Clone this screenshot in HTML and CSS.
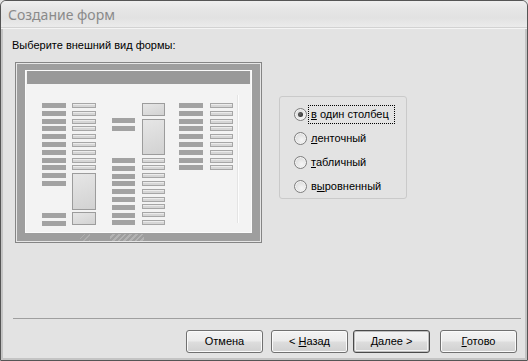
FILE: index.html
```html
<!DOCTYPE html>
<html lang="ru">
<head>
<meta charset="utf-8">
<title>Создание форм</title>
<link rel="stylesheet" href="styles.css">
</head>
<body>
<div class="window">
  <div class="titlebar"><span class="title">Создание форм</span></div>
  <div class="client">
    <div class="heading">Выберите внешний вид формы:</div>
    <div class="main">
      <div class="pic">
        <div class="pic-band">
          <div class="pic-inner">
            <div class="pic-header"></div>
            <div class="pic-body">
              <div class="stack s-a">
                <div class="lbl"></div><div class="lbl"></div><div class="lbl"></div><div class="lbl"></div>
                <div class="lbl"></div><div class="lbl"></div><div class="lbl"></div><div class="lbl"></div>
                <div class="lbl"></div><div class="lbl"></div><div class="lbl"></div>
                <div class="lbl a-gap"></div><div class="lbl"></div>
              </div>
              <div class="stack s-b">
                <div class="fld"></div><div class="fld"></div><div class="fld"></div><div class="fld"></div>
                <div class="fld"></div><div class="fld"></div><div class="fld"></div><div class="fld"></div>
                <div class="fld"></div>
                <div class="box b-big"></div>
                <div class="box b-small"></div>
              </div>
              <div class="stack s-c">
                <div class="lbl"></div><div class="lbl"></div>
                <div class="lbl c-gap"></div><div class="lbl"></div><div class="lbl"></div><div class="lbl"></div>
                <div class="lbl"></div><div class="lbl"></div><div class="lbl"></div><div class="lbl"></div>
                <div class="lbl"></div>
              </div>
              <div class="stack s-d">
                <div class="box d-top"></div>
                <div class="box d-big"></div>
                <div class="fld"></div><div class="fld"></div><div class="fld"></div><div class="fld"></div>
                <div class="fld"></div><div class="fld"></div><div class="fld"></div><div class="fld"></div>
                <div class="fld"></div>
              </div>
              <div class="stack s-e">
                <div class="lbl"></div><div class="lbl"></div><div class="lbl"></div><div class="lbl"></div>
                <div class="lbl"></div><div class="lbl"></div><div class="lbl"></div><div class="lbl"></div>
                <div class="lbl"></div>
              </div>
              <div class="stack s-f">
                <div class="fld"></div><div class="fld"></div><div class="fld"></div><div class="fld"></div>
                <div class="fld"></div><div class="fld"></div><div class="fld"></div><div class="fld"></div>
                <div class="fld"></div>
              </div>
              <div class="vline"></div>
            </div>
          </div>
        </div>
      </div>
      <div class="options">
        <div class="opt"><span class="radio checked"></span><span class="opt-text focus"><u>в</u> один столбец</span></div>
        <div class="opt"><span class="radio"></span><span class="opt-text"><u>л</u>енточный</span></div>
        <div class="opt"><span class="radio"></span><span class="opt-text"><u>т</u>абличный</span></div>
        <div class="opt"><span class="radio"></span><span class="opt-text">в<u>ы</u>ровненный</span></div>
      </div>
    </div>
    <div class="footer">
      <div class="sep"></div>
      <div class="buttons">
        <div class="btn"><span>Отмена</span></div>
        <div class="btn btn-back"><span>&lt; <u>Н</u>азад</span></div>
        <div class="btn btn-next btn-default"><span><u>Д</u>алее &gt;</span></div>
        <div class="btn btn-done"><span><u>Г</u>отово</span></div>
      </div>
    </div>
  </div>
</div>
</body>
</html>
```
FILE: styles.css
```css
html, body {
  margin: 0;
  padding: 0;
  background: #e3e3e3;
}
body {
  font-family: "Liberation Sans", Arial, sans-serif;
  font-size: 11px;
  color: #000;
}
.window {
  width: 528px;
  height: 361px;
  box-sizing: border-box;
  border: 1px solid #555;
  border-radius: 6px 6px 1px 1px;
  background: #c4c4c4;
  overflow: hidden;
  display: flex;
  flex-direction: column;
}
.titlebar {
  height: 26px;
  flex: none;
  display: flex;
  align-items: center;
  padding-left: 7px;
  background: linear-gradient(#efefef 0%, #e6e6e6 30%, #e2e2e2 65%, #ebebeb 100%);
  border-bottom: 1px solid #d2d2d2;
  box-shadow: 0 1px 0 #f4f4f4;
}
.title {
  font-family: "Noto Sans", "Open Sans", sans-serif;
  font-size: 14px;
  color: #8a8a8a;
  margin-top: 1px;
}
.client {
  flex: 1;
  margin: 1px 2px 2px 2px;
  background: #e3e3e3;
  display: flex;
  flex-direction: column;
  padding: 10px 0 5px 12px;
}
.heading {
  height: 13px;
  line-height: 13px;
  margin-left: -3px;
}
.main {
  display: flex;
  align-items: flex-start;
  margin-top: 10px;
}
/* picture */
.pic {
  width: 247px;
  height: 181px;
  box-sizing: border-box;
  border: 1px solid #858585;
  padding: 1px;
  background: #e6e6e6;
}
.pic-band {
  height: 100%;
  box-sizing: border-box;
  padding: 6px 8px 8px 8px;
  background:
    repeating-linear-gradient(135deg, rgba(255,255,255,0) 0 2px, rgba(255,255,255,0.22) 2px 4px) 93px 100% / 34px 7px no-repeat,
    repeating-linear-gradient(135deg, rgba(255,255,255,0) 0 3px, rgba(255,255,255,0.18) 3px 4px) 63px 100% / 10px 7px no-repeat,
    #9e9e9e;
}
.pic-inner {
  height: 163px;
  box-sizing: border-box;
  border: 1px solid #fbfbfb;
  background: #f3f3f3;
  display: flex;
  flex-direction: column;
}
.pic-header {
  height: 13px;
  margin: 0 1px;
  background: #999;
  flex: none;
}
.pic-body {
  display: flex;
  align-items: flex-start;
  padding: 19px 0 0 16px;
}
.stack {
  display: flex;
  flex-direction: column;
  gap: 2.8px;
  width: 24px;
}
.s-b { margin-left: 6px; }
.s-c { margin-left: 16px; width: 23px; margin-top: 15px; }
.s-d { margin-left: 7px; width: 23px; }
.s-e { margin-left: 14px; }
.s-f { margin-left: 7px; width: 23px; }
.lbl {
  height: 5px;
  background: #a2a2a2;
}
.fld {
  height: 5px;
  box-sizing: border-box;
  border: 1px solid #a6a6a6;
  background: #d6d6d6;
  box-shadow: inset 0 1px 0 #ececec;
}
.box {
  box-sizing: border-box;
  border: 1px solid #9c9c9c;
  background: linear-gradient(160deg, #e6e6e6 0%, #dadada 60%, #d2d2d2 100%);
}
.a-gap { margin-top: 24.2px; }
.c-gap { margin-top: 24.4px; }
.b-big { height: 37px; }
.b-small { height: 13px; margin-top: -1px; }
.d-top { height: 13px; }
.d-big { height: 36px; }
.vline {
  width: 1px;
  height: 128px;
  margin-left: 4px;
  margin-top: -8px;
  background: #e4e4e4;
  box-shadow: 1px 0 0 #fdfdfd;
}
/* options */
.options {
  margin-left: 17px;
  margin-top: 34px;
  width: 128px;
  height: 103px;
  box-sizing: border-box;
  border: 1px solid #cacaca;
  border-radius: 3px;
  padding: 6px 0 0 14px;
  display: flex;
  flex-direction: column;
}
.opt {
  height: 24px;
  display: flex;
  align-items: center;
}
.radio {
  width: 13px;
  height: 13px;
  box-sizing: border-box;
  border-radius: 50%;
  border: 1px solid #7e7e7e;
  background: radial-gradient(circle at 60% 65%, #f6f6f6 0%, #e2e2e2 55%, #cdcdcd 100%);
  box-shadow: inset 0 0 0 1px #f4f4f4;
  display: flex;
  align-items: center;
  justify-content: center;
  flex: none;
}
.radio.checked::after {
  content: "";
  width: 5px;
  height: 5px;
  border-radius: 50%;
  background: radial-gradient(circle at 40% 40%, #666 0%, #222 100%);
}
.opt-text {
  margin-left: 1px;
  padding: 2px 3px 3px 2px;
  border: 1px solid transparent;
  line-height: 12px;
}
.opt-text.focus {
  border: 1px dotted #000;
  padding-right: 5px;
}
u { text-decoration: underline; text-underline-offset: 1px; }
/* footer */
.footer {
  margin-top: auto;
  display: flex;
  flex-direction: column;
}
.sep {
  height: 1px;
  background: #9f9f9f;
  margin: 0 4px 0 -2px;
}
.buttons {
  display: flex;
  justify-content: flex-end;
  margin-top: 11px;
  padding-right: 8px;
}
.btn {
  width: 77px;
  height: 23px;
  box-sizing: border-box;
  border: 1px solid #707070;
  border-radius: 3px;
  background: linear-gradient(#f3f3f3 0%, #ebebeb 48%, #dddddd 52%, #d0d0d0 100%);
  box-shadow: inset 0 0 0 1px #fafafa;
  display: flex;
  align-items: center;
  justify-content: center;
  line-height: 13px;
  white-space: pre;
}
.btn-back { margin-left: 8px; }
.btn-next { margin-left: 5px; }
.btn-done { margin-left: 10px; }
.btn-default {
  border-color: #4a4a4a;
  box-shadow: inset 0 0 0 1px #bdbdbd, inset 0 0 0 2px #f2f2f2;
}
```
